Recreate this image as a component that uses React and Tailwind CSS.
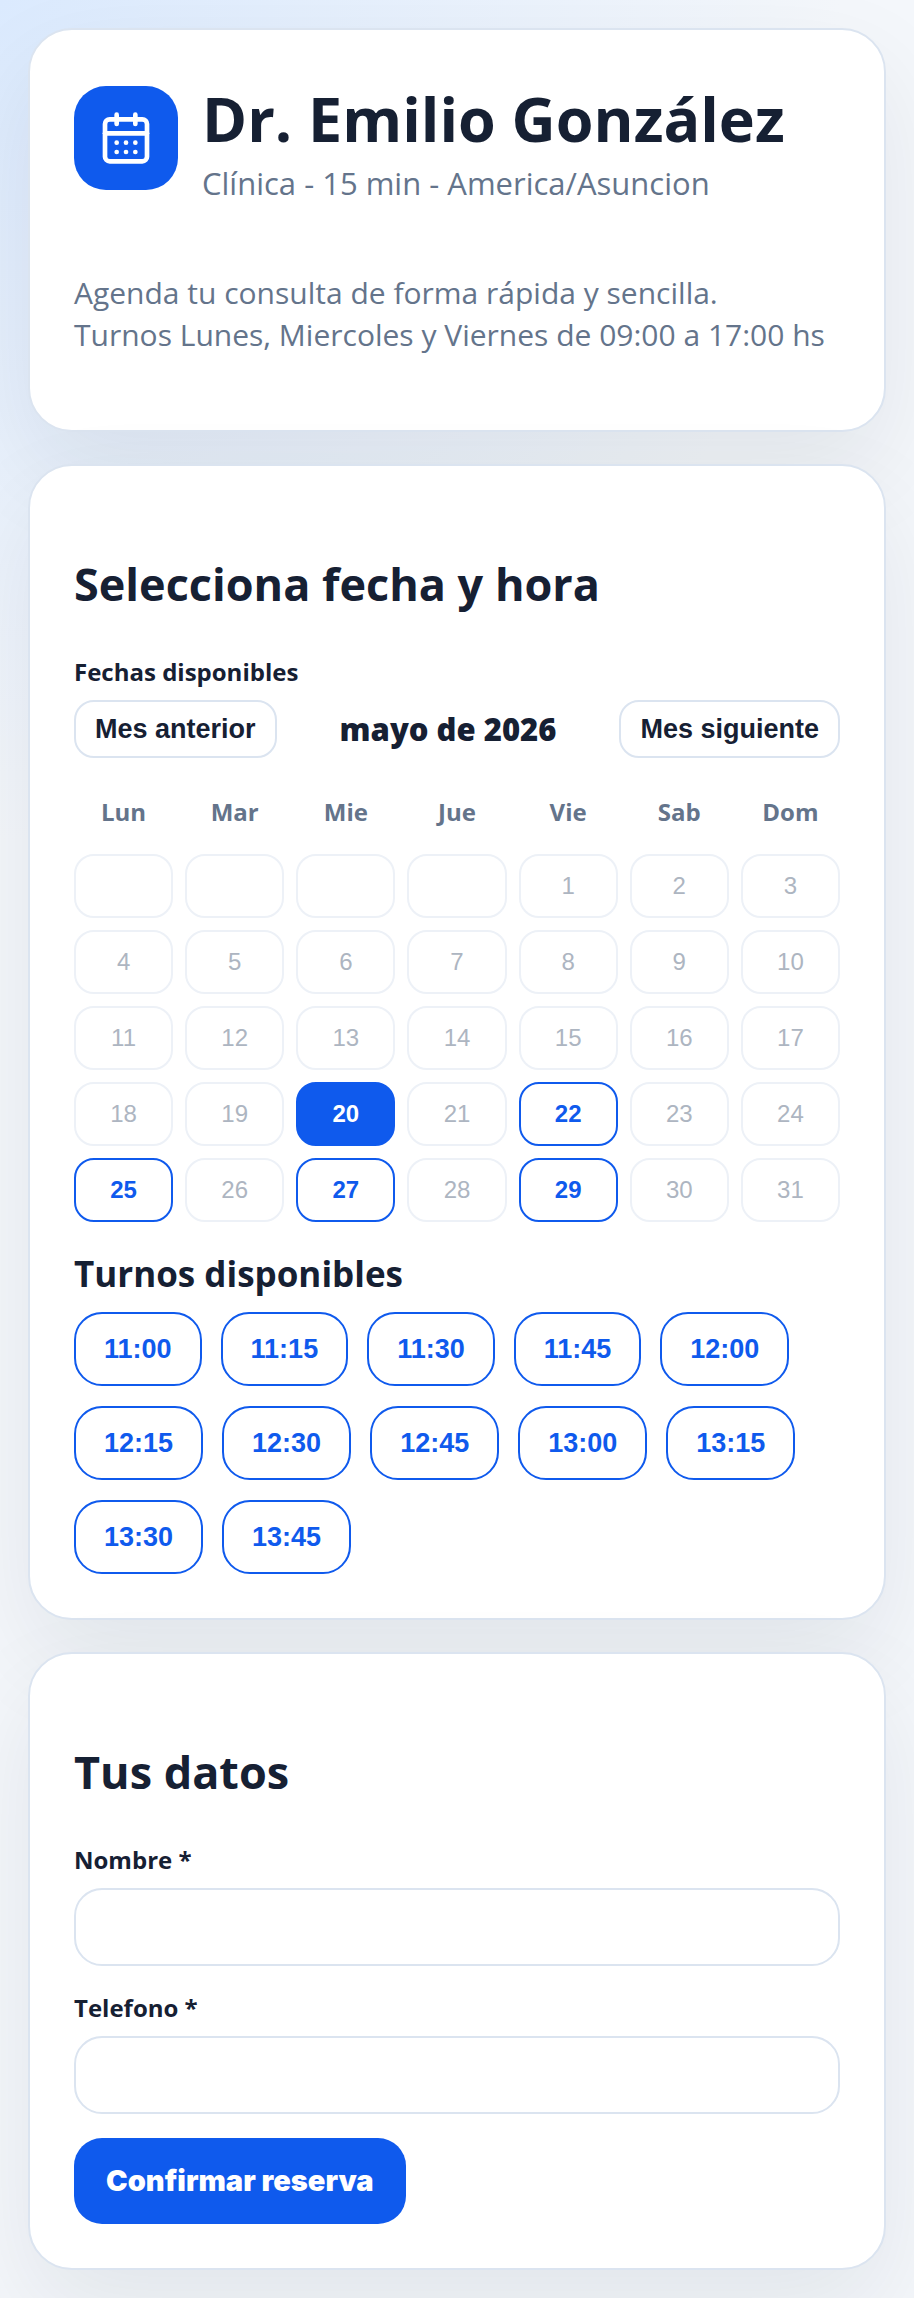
import React, { useState } from "react";
import { CalendarDays } from "lucide-react";
import clsx from "clsx";

const WEEKDAYS = ["Lun", "Mar", "Mie", "Jue", "Vie", "Sab", "Dom"];
const AVAILABLE_DAYS = [20, 22, 25, 27, 29];
const SLOTS = [
  "11:00",
  "11:15",
  "11:30",
  "11:45",
  "12:00",
  "12:15",
  "12:30",
  "12:45",
  "13:00",
  "13:15",
  "13:30",
  "13:45",
];

// May 2026 starts on a Friday, so the first four cells stay empty
const CELLS = [
  ...Array(4).fill(null),
  ...Array.from({ length: 31 }, (_, i) => i + 1),
];

const Card = ({ children }) => (
  <section className="bg-white border-2 border-[#dbe4f0] rounded-[44px] p-11 shadow-[0_40px_100px_rgba(15,23,42,0.08)]">
    {children}
  </section>
);

const CardTitle = ({ children }) => (
  <h2 className="mt-[42px] mb-[38px] text-[45px] leading-16 font-bold">{children}</h2>
);

const Field = ({ id, label, type, value, onChange }) => (
  <div className="mb-6">
    <label htmlFor={id} className="block mb-[10px] text-2xl leading-9 font-bold">
      {label}
    </label>
    <input
      id={id}
      type={type}
      value={value}
      onChange={(e) => onChange(e.target.value)}
      required
      className="block w-full h-[78px] px-7 text-[27px] bg-white border-2 border-[#dbe4f0] rounded-[28px]"
    />
  </div>
);

const MonthButton = ({ children }) => (
  <button
    type="button"
    className="h-[58px] px-[19px] font-['Liberation_Sans',sans-serif] text-[27px] font-bold bg-white border-2 border-[#dbe4f0] rounded-[20px]"
  >
    {children}
  </button>
);

const DayButton = ({ day, selected, onSelect }) => {
  const available = AVAILABLE_DAYS.includes(day);

  return (
    <button
      type="button"
      disabled={!available}
      onClick={() => onSelect(day)}
      className={clsx(
        "h-16 border-2 rounded-[20px] font-['Liberation_Sans',sans-serif] text-2xl",
        !available && "bg-white border-[#edf1f7] text-[#adb5c1]",
        available && "border-[#0f5aed] font-bold",
        available && (selected ? "bg-[#0f5aed] text-white" : "bg-white text-[#0f5aed]"),
      )}
    >
      {day}
    </button>
  );
};

const App = () => {
  const [selectedDay, setSelectedDay] = useState(20);
  const [selectedSlot, setSelectedSlot] = useState(null);
  const [name, setName] = useState("");
  const [phone, setPhone] = useState("");

  return (
    <main className="min-h-screen p-7 flex flex-col gap-8 font-['Open_Sans',sans-serif] text-[#162033] bg-[#f4f7fb] bg-[radial-gradient(circle_at_top_left,#dbeafe,transparent_34%)]">
      <Card>
        <div className="flex items-center gap-6">
          <div className="size-26 shrink-0 flex items-center justify-center rounded-[32px] bg-[#0f5aed] text-white">
            <CalendarDays size={56} />
          </div>
          <div>
            <h1 className="text-[61px] leading-[90px] font-bold">Dr. Emilio González</h1>
            <p className="text-[31px] leading-[38px] text-[#64748b]">
              Clínica - 15 min - America/Asuncion
            </p>
          </div>
        </div>
        <p className="mt-[70px] mb-[30px] text-[30px] leading-[42px] text-[#64748b]">
          Agenda tu consulta de forma rápida y sencilla.
          <br />
          Turnos Lunes, Miercoles y Viernes de 09:00 a 17:00 hs
        </p>
      </Card>

      <Card>
        <CardTitle>Selecciona fecha y hora</CardTitle>
        <p className="mb-[10px] text-2xl leading-9 font-bold">Fechas disponibles</p>
        <div className="mb-6 flex items-center justify-between">
          <MonthButton>Mes anterior</MonthButton>
          <strong className="text-[31px] leading-10 font-extrabold">mayo de 2026</strong>
          <MonthButton>Mes siguiente</MonthButton>
        </div>
        <div className="grid grid-cols-7 gap-3">
          {WEEKDAYS.map((weekday) => (
            <span
              key={weekday}
              className="py-3 text-center text-2xl leading-9 font-bold text-[#64748b]"
            >
              {weekday}
            </span>
          ))}
          {CELLS.map((day, i) => (
            <DayButton
              key={i}
              day={day}
              selected={day === selectedDay}
              onSelect={setSelectedDay}
            />
          ))}
        </div>

        <h3 className="mt-7 mb-[14px] text-[35px] leading-12 font-bold">
          Turnos disponibles
        </h3>
        <div className="flex flex-wrap gap-x-[19px] gap-y-5">
          {SLOTS.map((slot) => (
            <button
              key={slot}
              type="button"
              onClick={() => setSelectedSlot(slot)}
              className={clsx(
                "h-[74px] px-7 border-2 border-[#0f5aed] rounded-[28px] font-['Liberation_Sans',sans-serif] text-[27px] font-bold",
                slot === selectedSlot ? "bg-[#0f5aed] text-white" : "bg-white text-[#0f5aed]",
              )}
            >
              {slot}
            </button>
          ))}
        </div>
      </Card>

      <Card>
        <CardTitle>Tus datos</CardTitle>
        <form onSubmit={(e) => e.preventDefault()}>
          <Field id="name" label="Nombre *" type="text" value={name} onChange={setName} />
          <Field id="phone" label="Telefono *" type="tel" value={phone} onChange={setPhone} />
          <button
            type="submit"
            className="block h-[86px] px-8 rounded-[28px] bg-[#0f5aed] text-white font-['Inter',sans-serif] text-[29px] font-black"
          >
            Confirmar reserva
          </button>
        </form>
      </Card>
    </main>
  );
};

export default App;
